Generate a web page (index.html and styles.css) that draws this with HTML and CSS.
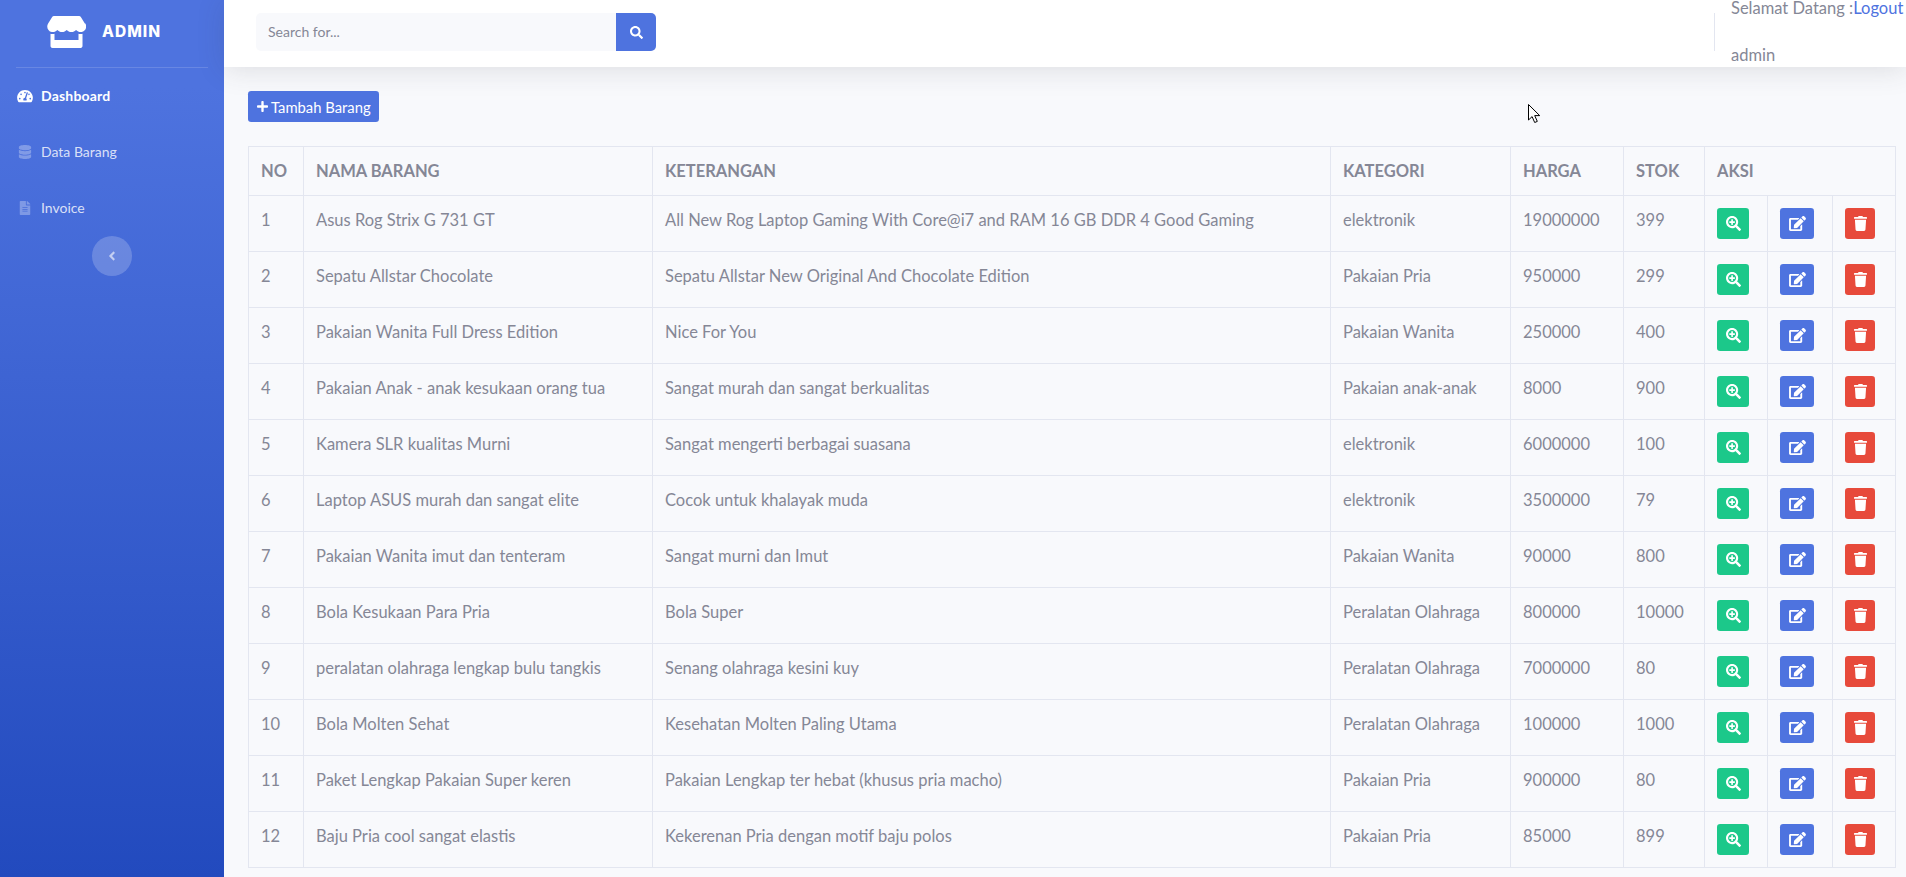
FILE: index.html
```html
<!DOCTYPE html>
<html lang="en">
<head>
  <meta charset="UTF-8">
  <meta name="viewport" content="width=device-width, initial-scale=1.0">
  <title>Data Barang</title>
  <link rel="stylesheet" href="styles.css">
</head>
<body>
  <!-- Icon set -->
  <svg class="icon-defs" aria-hidden="true">
    <symbol id="i-store" viewBox="0 0 616 512"><path d="M602 118.6L537.1 15C531.3 5.7 521 0 510 0H106C95 0 84.7 5.7 78.9 15L14 118.6c-33.9 54.1-3.9 129.3 59.4 137.9 4.6.6 9.2.9 13.7.9 29.9 0 56.4-13.1 74.8-33.4 18.4 20.3 45 33.4 74.8 33.4 29.9 0 56.4-13.1 74.8-33.4 18.4 20.3 45 33.4 74.8 33.4 29.9 0 56.4-13.1 74.8-33.4 18.5 20.3 45 33.4 74.8 33.4 4.6 0 9.1-.3 13.7-.9 63.5-8.5 93.6-83.7 59.6-137.9zM529.5 288c-10 0-19.9-1.5-29.5-3.8V384H116v-99.8c-9.6 2.2-19.5 3.8-29.5 3.8-6 0-12.1-.4-18-1.2-5.6-.8-11.1-2.1-16.4-3.6V480c0 17.7 14.3 32 32 32h448c17.7 0 32-14.3 32-32V283.2c-5.4 1.6-10.8 2.9-16.4 3.6-6.1.8-12.1 1.2-18.2 1.2z"/></symbol>
    <symbol id="i-gauge" viewBox="0 0 576 512"><path d="M288 32C128.94 32 0 160.94 0 320c0 52.8 14.25 102.26 39.06 144.8 5.61 9.62 16.3 15.2 27.44 15.2h443c11.14 0 21.83-5.58 27.44-15.2C561.75 422.26 576 372.8 576 320c0-159.06-128.94-288-288-288zm0 64c14.71 0 26.58 10.13 30.32 23.65-1.11 2.26-2.64 4.23-3.45 6.67l-9.22 27.67c-5.13 3.49-10.97 6.01-17.64 6.01-17.67 0-32-14.33-32-32S270.33 96 288 96zM96 384c-17.67 0-32-14.33-32-32s14.33-32 32-32 32 14.33 32 32-14.33 32-32 32zm48-160c-17.67 0-32-14.33-32-32s14.33-32 32-32 32 14.33 32 32-14.33 32-32 32zm246.77-72.41l-61.33 184C343.13 347.33 352 364.54 352 384c0 11.72-3.38 22.55-8.88 32H232.88c-5.5-9.45-8.88-20.28-8.88-32 0-33.94 26.5-61.43 59.9-63.59l61.34-184.01c4.17-12.56 17.73-19.45 30.36-15.17 12.57 4.19 19.35 17.79 15.17 30.36zm14.66 57.2l15.52-46.55c3.47-1.29 7.13-2.23 11.05-2.23 17.67 0 32 14.33 32 32s-14.33 32-32 32c-11.38-.01-20.89-6.28-26.57-15.22zM480 384c-17.67 0-32-14.33-32-32s14.33-32 32-32 32 14.33 32 32-14.33 32-32 32z"/></symbol>
    <symbol id="i-database" viewBox="0 0 448 512"><path d="M448 73.143v45.714C448 159.143 347.667 192 224 192S0 159.143 0 118.857V73.143C0 32.857 100.333 0 224 0s224 32.857 224 73.143zM448 176v102.857C448 319.143 347.667 352 224 352S0 319.143 0 278.857V176c48.125 33.143 136.208 48.572 224 48.572S399.874 209.143 448 176zm0 160v102.857C448 479.143 347.667 512 224 512S0 479.143 0 438.857V336c48.125 33.143 136.208 48.572 224 48.572S399.874 369.143 448 336z"/></symbol>
    <symbol id="i-file" viewBox="0 0 384 512"><path d="M224 136V0H24C10.7 0 0 10.7 0 24v464c0 13.3 10.7 24 24 24h336c13.3 0 24-10.7 24-24V160H248c-13.2 0-24-10.8-24-24zm64 236c0 6.6-5.4 12-12 12H108c-6.6 0-12-5.4-12-12v-8c0-6.6 5.4-12 12-12h168c6.6 0 12 5.4 12 12v8zm0-64c0 6.6-5.4 12-12 12H108c-6.6 0-12-5.4-12-12v-8c0-6.6 5.4-12 12-12h168c6.6 0 12 5.4 12 12v8zm0-72v8c0 6.6-5.4 12-12 12H108c-6.6 0-12-5.4-12-12v-8c0-6.6 5.4-12 12-12h168c6.6 0 12 5.4 12 12zm96-114.1v6.1H256V0h6.1c6.4 0 12.5 2.5 17 7l97.9 98c4.5 4.5 7 10.6 7 16.9z"/></symbol>
    <symbol id="i-angle" viewBox="0 0 256 512"><path d="M31.7 239l136-136c9.4-9.4 24.6-9.4 33.9 0l22.6 22.6c9.4 9.4 9.4 24.6 0 33.9L127.9 256l96.4 96.4c9.4 9.4 9.4 24.6 0 33.9L201.7 409c-9.4 9.4-24.6 9.4-33.9 0l-136-136c-9.5-9.4-9.5-24.6-.1-34z"/></symbol>
    <symbol id="i-search" viewBox="0 0 512 512"><path d="M505 442.7L405.3 343c-4.5-4.5-10.6-7-17-7H372c27.6-35.3 44-79.7 44-128C416 93.1 322.9 0 208 0S0 93.1 0 208s93.1 208 208 208c48.3 0 92.7-16.4 128-44v16.3c0 6.4 2.5 12.5 7 17l99.7 99.7c9.4 9.4 24.6 9.4 33.9 0l28.3-28.3c9.4-9.4 9.4-24.6.1-34zM208 336c-70.7 0-128-57.2-128-128 0-70.7 57.2-128 128-128 70.7 0 128 57.2 128 128 0 70.7-57.2 128-128 128z"/></symbol>
    <symbol id="i-plus" viewBox="0 0 448 512"><path d="M416 208H272V64c0-17.67-14.33-32-32-32h-32c-17.67 0-32 14.33-32 32v144H32c-17.67 0-32 14.33-32 32v32c0 17.67 14.33 32 32 32h144v144c0 17.67 14.33 32 32 32h32c17.67 0 32-14.33 32-32V304h144c17.67 0 32-14.33 32-32v-32c0-17.67-14.33-32-32-32z"/></symbol>
    <symbol id="i-zoom" viewBox="0 0 512 512"><path d="M304 192v32c0 6.6-5.4 12-12 12h-56v56c0 6.6-5.4 12-12 12h-32c-6.6 0-12-5.4-12-12v-56h-56c-6.6 0-12-5.4-12-12v-32c0-6.6 5.4-12 12-12h56v-56c0-6.6 5.4-12 12-12h32c6.6 0 12 5.4 12 12v56h56c6.6 0 12 5.4 12 12zm201 284.7L476.7 505c-9.4 9.4-24.6 9.4-33.9 0L343 405.3c-4.5-4.5-7-10.6-7-17V372c-35.3 27.6-79.7 44-128 44C93.1 416 0 322.9 0 208S93.1 0 208 0s208 93.1 208 208c0 48.3-16.4 92.7-44 128h16.3c6.4 0 12.5 2.5 17 7l99.7 99.7c9.3 9.4 9.3 24.6 0 34zM344 208c0-75.2-60.8-136-136-136S72 132.8 72 208s60.8 136 136 136 136-60.8 136-136z"/></symbol>
    <symbol id="i-edit" viewBox="0 0 576 512"><path d="M402.6 83.2l90.2 90.2c3.8 3.8 3.8 10 0 13.8L274.4 405.6l-92.8 10.3c-12.4 1.4-22.9-9.1-21.5-21.5l10.3-92.8L388.8 83.2c3.8-3.8 10-3.8 13.8 0zm162-22.9l-48.8-48.8c-15.2-15.2-39.9-15.2-55.2 0l-35.4 35.4c-3.8 3.8-3.8 10 0 13.8l90.2 90.2c3.8 3.8 10 3.8 13.8 0l35.4-35.4c15.2-15.3 15.2-40 0-55.2zM384 346.2V448H64V128h229.8c3.2 0 6.2-1.3 8.5-3.5l40-40c7.6-7.6 2.2-20.5-8.5-20.5H48C21.5 64 0 85.5 0 112v352c0 26.5 21.5 48 48 48h352c26.5 0 48-21.5 48-48V306.2c0-10.7-12.9-16-20.5-8.5l-40 40c-2.2 2.3-3.5 5.3-3.5 8.5z"/></symbol>
    <symbol id="i-trash" viewBox="0 0 448 512"><path d="M432 32H312l-9.4-18.7A24 24 0 0 0 281.1 0H166.8a23.72 23.72 0 0 0-21.4 13.3L136 32H16A16 16 0 0 0 0 48v32a16 16 0 0 0 16 16h416a16 16 0 0 0 16-16V48a16 16 0 0 0-16-16zM53.2 467a48 48 0 0 0 47.9 45h245.8a48 48 0 0 0 47.9-45L416 128H32z"/></symbol>
  </svg>

  <div class="wrapper">
    <!-- Sidebar -->
    <aside class="sidebar">
      <a class="brand" href="#">
        <svg class="brand-icon"><use href="#i-store"/></svg>
        <span class="brand-text">ADMIN</span>
      </a>
      <hr class="sidebar-divider">
      <nav>
        <a class="nav-link active" href="#"><svg class="nav-icon"><use href="#i-gauge"/></svg>Dashboard</a>
        <a class="nav-link" href="#"><svg class="nav-icon"><use href="#i-database"/></svg>Data Barang</a>
        <a class="nav-link" href="#"><svg class="nav-icon"><use href="#i-file"/></svg>Invoice</a>
      </nav>
      <button class="sidebar-toggle" type="button"><svg><use href="#i-angle"/></svg></button>
    </aside>

    <div class="main">
      <!-- Topbar -->
      <header class="topbar">
        <form class="search">
          <input class="search-input" type="text" placeholder="Search for...">
          <button class="search-btn" type="button"><svg><use href="#i-search"/></svg></button>
        </form>
        <div class="user-info">
          <p>Selamat Datang :<a href="#">Logout</a></p>
          <p>admin</p>
        </div>
      </header>

      <!-- Content -->
      <main class="content">
        <a class="btn-add" href="#"><svg><use href="#i-plus"/></svg>Tambah Barang</a>

        <table class="data-table">
          <colgroup>
            <col class="col-no">
            <col class="col-nama">
            <col class="col-ket">
            <col class="col-kat">
            <col class="col-harga">
            <col class="col-stok">
            <col class="col-aksi1">
            <col class="col-aksi2">
            <col class="col-aksi3">
          </colgroup>
          <thead>
            <tr><th>NO</th><th>NAMA BARANG</th><th>KETERANGAN</th><th>KATEGORI</th><th>HARGA</th><th>STOK</th><th colspan="3">AKSI</th></tr>
          </thead>
          <tbody>
            <tr><td>1</td><td>Asus Rog Strix G 731 GT</td><td>All New Rog Laptop Gaming With Core@i7 and RAM 16 GB DDR 4 Good Gaming</td><td>elektronik</td><td>19000000</td><td>399</td>
              <td><a class="btn btn-green" href="#"><svg><use href="#i-zoom"/></svg></a></td><td><a class="btn btn-blue" href="#"><svg><use href="#i-edit"/></svg></a></td><td><a class="btn btn-red" href="#"><svg><use href="#i-trash"/></svg></a></td></tr>
            <tr><td>2</td><td>Sepatu Allstar Chocolate</td><td>Sepatu Allstar New Original And Chocolate Edition</td><td>Pakaian Pria</td><td>950000</td><td>299</td>
              <td><a class="btn btn-green" href="#"><svg><use href="#i-zoom"/></svg></a></td><td><a class="btn btn-blue" href="#"><svg><use href="#i-edit"/></svg></a></td><td><a class="btn btn-red" href="#"><svg><use href="#i-trash"/></svg></a></td></tr>
            <tr><td>3</td><td>Pakaian Wanita Full Dress Edition</td><td>Nice For You</td><td>Pakaian Wanita</td><td>250000</td><td>400</td>
              <td><a class="btn btn-green" href="#"><svg><use href="#i-zoom"/></svg></a></td><td><a class="btn btn-blue" href="#"><svg><use href="#i-edit"/></svg></a></td><td><a class="btn btn-red" href="#"><svg><use href="#i-trash"/></svg></a></td></tr>
            <tr><td>4</td><td>Pakaian Anak - anak kesukaan orang tua</td><td>Sangat murah dan sangat berkualitas</td><td>Pakaian anak-anak</td><td>8000</td><td>900</td>
              <td><a class="btn btn-green" href="#"><svg><use href="#i-zoom"/></svg></a></td><td><a class="btn btn-blue" href="#"><svg><use href="#i-edit"/></svg></a></td><td><a class="btn btn-red" href="#"><svg><use href="#i-trash"/></svg></a></td></tr>
            <tr><td>5</td><td>Kamera SLR kualitas Murni</td><td>Sangat mengerti berbagai suasana</td><td>elektronik</td><td>6000000</td><td>100</td>
              <td><a class="btn btn-green" href="#"><svg><use href="#i-zoom"/></svg></a></td><td><a class="btn btn-blue" href="#"><svg><use href="#i-edit"/></svg></a></td><td><a class="btn btn-red" href="#"><svg><use href="#i-trash"/></svg></a></td></tr>
            <tr><td>6</td><td>Laptop ASUS murah dan sangat elite</td><td>Cocok untuk khalayak muda</td><td>elektronik</td><td>3500000</td><td>79</td>
              <td><a class="btn btn-green" href="#"><svg><use href="#i-zoom"/></svg></a></td><td><a class="btn btn-blue" href="#"><svg><use href="#i-edit"/></svg></a></td><td><a class="btn btn-red" href="#"><svg><use href="#i-trash"/></svg></a></td></tr>
            <tr><td>7</td><td>Pakaian Wanita imut dan tenteram</td><td>Sangat murni dan Imut</td><td>Pakaian Wanita</td><td>90000</td><td>800</td>
              <td><a class="btn btn-green" href="#"><svg><use href="#i-zoom"/></svg></a></td><td><a class="btn btn-blue" href="#"><svg><use href="#i-edit"/></svg></a></td><td><a class="btn btn-red" href="#"><svg><use href="#i-trash"/></svg></a></td></tr>
            <tr><td>8</td><td>Bola Kesukaan Para Pria</td><td>Bola Super</td><td>Peralatan Olahraga</td><td>800000</td><td>10000</td>
              <td><a class="btn btn-green" href="#"><svg><use href="#i-zoom"/></svg></a></td><td><a class="btn btn-blue" href="#"><svg><use href="#i-edit"/></svg></a></td><td><a class="btn btn-red" href="#"><svg><use href="#i-trash"/></svg></a></td></tr>
            <tr><td>9</td><td>peralatan olahraga lengkap bulu tangkis</td><td>Senang olahraga kesini kuy</td><td>Peralatan Olahraga</td><td>7000000</td><td>80</td>
              <td><a class="btn btn-green" href="#"><svg><use href="#i-zoom"/></svg></a></td><td><a class="btn btn-blue" href="#"><svg><use href="#i-edit"/></svg></a></td><td><a class="btn btn-red" href="#"><svg><use href="#i-trash"/></svg></a></td></tr>
            <tr><td>10</td><td>Bola Molten Sehat</td><td>Kesehatan Molten Paling Utama</td><td>Peralatan Olahraga</td><td>100000</td><td>1000</td>
              <td><a class="btn btn-green" href="#"><svg><use href="#i-zoom"/></svg></a></td><td><a class="btn btn-blue" href="#"><svg><use href="#i-edit"/></svg></a></td><td><a class="btn btn-red" href="#"><svg><use href="#i-trash"/></svg></a></td></tr>
            <tr><td>11</td><td>Paket Lengkap Pakaian Super keren</td><td>Pakaian Lengkap ter hebat (khusus pria macho)</td><td>Pakaian Pria</td><td>900000</td><td>80</td>
              <td><a class="btn btn-green" href="#"><svg><use href="#i-zoom"/></svg></a></td><td><a class="btn btn-blue" href="#"><svg><use href="#i-edit"/></svg></a></td><td><a class="btn btn-red" href="#"><svg><use href="#i-trash"/></svg></a></td></tr>
            <tr><td>12</td><td>Baju Pria cool sangat elastis</td><td>Kekerenan Pria dengan motif baju polos</td><td>Pakaian Pria</td><td>85000</td><td>899</td>
              <td><a class="btn btn-green" href="#"><svg><use href="#i-zoom"/></svg></a></td><td><a class="btn btn-blue" href="#"><svg><use href="#i-edit"/></svg></a></td><td><a class="btn btn-red" href="#"><svg><use href="#i-trash"/></svg></a></td></tr>
          </tbody>
        </table>
      </main>
    </div>
  </div>

  <!-- Mouse pointer caught in the screenshot -->
  <svg class="pointer" viewBox="0 0 13 19"><path d="M.5.5v15.5l3.6-3.4 2.6 5.9 2.6-1.1-2.6-5.8h5z"/></svg>
</body>
</html>
```

FILE: styles.css
```css
body {
  font-family: 'Lato', 'Noto Sans', sans-serif;
  font-size: 16.5px;
  line-height: 24px;
  margin: 0;
  background-color: #f8f9fc;
  color: #858796;
}

a {
  text-decoration: none;
}

.icon-defs {
  display: none;
}

.wrapper {
  display: flex;
  min-height: 100vh;
}

/* Sidebar */
.sidebar {
  width: 224px;
  flex-shrink: 0;
  background-color: #4e73df;
  background-image: linear-gradient(180deg, #4e73df 10%, #224abe 100%);
}

.brand {
  display: flex;
  align-items: center;
  height: 67px;
  padding-left: 47px;
  box-sizing: border-box;
  color: #fff;
}

.brand-icon {
  width: 39px;
  height: 32px;
  fill: #fff;
  margin-right: 16px;
  margin-top: -4px;
}

.brand-text {
  font-family: 'Inter', sans-serif;
  font-size: 15.5px;
  font-weight: 800;
  letter-spacing: 1px;
  margin-top: -3px;
}

.sidebar-divider {
  margin: 0 16px;
  height: 1px;
  border: 0;
  background-color: rgba(255, 255, 255, .15);
}

.nav-link {
  display: flex;
  align-items: center;
  height: 56px;
  padding-left: 17px;
  font-size: 14px;
  color: rgba(255, 255, 255, .8);
}

.nav-icon {
  width: 16px;
  height: 14px;
  margin-right: 8px;
  fill: rgba(255, 255, 255, .3);
}

.nav-link.active {
  color: #fff;
  font-weight: 700;
  letter-spacing: .2px;
}

.nav-link.active .nav-icon {
  fill: #fff;
}

.sidebar-toggle {
  display: flex;
  align-items: center;
  justify-content: center;
  width: 40px;
  height: 40px;
  margin: 0 auto;
  padding: 0;
  border: 0;
  border-radius: 50%;
  background-color: rgba(255, 255, 255, .2);
}

.sidebar-toggle svg {
  width: 8px;
  height: 14px;
  fill: rgba(255, 255, 255, .6);
}

/* Topbar */
.main {
  flex: 1;
  min-width: 0;
}

.topbar {
  display: flex;
  align-items: flex-start;
  justify-content: space-between;
  height: 67px;
  padding: 13px 0 0 32px;
  box-sizing: border-box;
  background-color: #fff;
  box-shadow: 0 2.4px 28px 0 rgba(58, 59, 69, .15);
}

.search {
  display: flex;
  height: 38px;
}

.search-input {
  width: 360px;
  padding: 4px 12px 6px;
  box-sizing: border-box;
  border: 0;
  border-radius: 5px 0 0 5px;
  background-color: #f8f9fc;
  font-family: inherit;
  font-size: 14px;
  color: #858796;
}

.search-input::placeholder {
  color: #858796;
  opacity: 1;
}

.search-btn {
  display: flex;
  align-items: center;
  justify-content: center;
  width: 40px;
  padding: 0;
  border: 0;
  border-radius: 0 5px 5px 0;
  background-color: #4e73df;
}

.search-btn svg {
  width: 13px;
  height: 13px;
  fill: #fff;
}

.user-info {
  width: 192px;
  height: 38px;
  padding-left: 16px;
  box-sizing: border-box;
  border-left: 1px solid #e3e6f0;
}

.user-info p {
  margin: -17px 0 23px;
  white-space: nowrap;
}

.user-info p + p {
  margin: 0;
}

.user-info a {
  color: #4e73df;
}

/* Content */
.content {
  padding: 24px 10px 9px 24px;
}

.btn-add {
  display: inline-flex;
  align-items: center;
  height: 31px;
  padding: 0 8px 0 9px;
  margin-bottom: 24px;
  border-radius: 3.2px;
  background-color: #4e73df;
  color: #fff;
  font-size: 14.8px;
  vertical-align: top;
}

.btn-add svg {
  width: 11px;
  height: 13px;
  margin-right: 3px;
  fill: #fff;
}

.data-table {
  display: table;
  width: 1647px;
  table-layout: fixed;
  border-collapse: collapse;
}

.col-no { width: 55px; }
.col-nama { width: 349px; }
.col-ket { width: 678px; }
.col-kat { width: 180px; }
.col-harga { width: 113px; }
.col-stok { width: 81px; }
.col-aksi1 { width: 63px; }
.col-aksi2 { width: 65px; }
.col-aksi3 { width: 63px; }

.data-table th,
.data-table td {
  padding: 12px;
  border: 1px solid #e3e6f0;
  text-align: left;
  vertical-align: top;
  white-space: nowrap;
}

.data-table th {
  font-weight: 700;
}

.data-table td:nth-child(n+7) {
  padding-left: 12px;
  padding-right: 0;
}

.btn {
  display: flex;
  align-items: center;
  justify-content: center;
  height: 31px;
  border-radius: 3.2px;
}

.btn svg {
  fill: #fff;
}

.btn-green {
  width: 32px;
  background-color: #1cc88a;
}

.btn-green svg {
  width: 15px;
  height: 15px;
}

.btn-blue {
  width: 34px;
  background-color: #4e73df;
}

.btn-blue svg {
  width: 17px;
  height: 15px;
}

.btn-red {
  width: 30px;
  background-color: #e74a3b;
}

.btn-red svg {
  width: 13px;
  height: 15px;
}

/* Pointer */
.pointer {
  position: absolute;
  left: 1528px;
  top: 104px;
  width: 13px;
  height: 19px;
  fill: #fff;
  stroke: #000;
  stroke-width: 1;
}
```
